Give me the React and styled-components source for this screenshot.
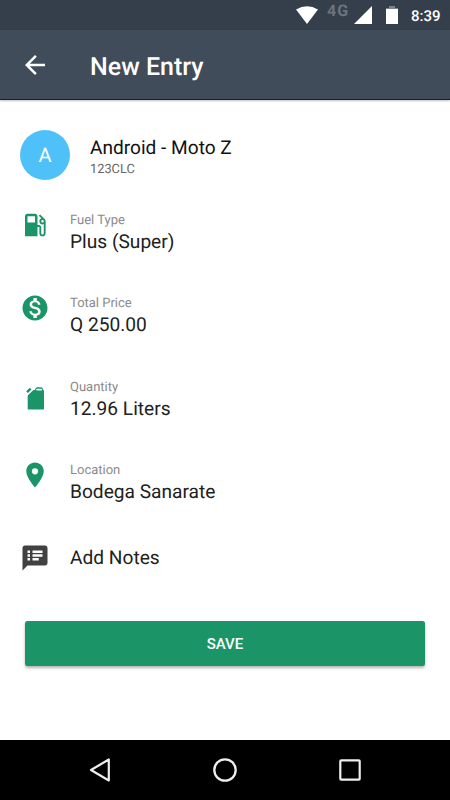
import styled, { createGlobalStyle } from "styled-components";
import {
  MdArrowBack,
  MdLocalGasStation,
  MdMonetizationOn,
  MdPlace,
  MdSpeakerNotes,
} from "react-icons/md";

const GlobalStyle = createGlobalStyle`
  * {
    box-sizing: border-box;
  }
  body {
    margin: 0;
    background-color: white;
    font-family: Roboto, sans-serif;
    text-rendering: geometricPrecision;
  }
`;

const Container = styled.div`
  display: flex;
  flex-direction: column;
  width: 450px;
  height: 800px;
  background-color: white;
  overflow: hidden;
`;
const StatusBar = styled.div`
  display: flex;
  align-items: center;
  justify-content: flex-end;
  flex-shrink: 0;
  height: 30px;
  padding-right: 10px;
  background-color: #343f4b;
  color: white;
`;
const StatusIcon = styled.svg`
  display: block;
  margin-right: ${(props) => props.$gap}px;
`;
const Network = styled.span`
  width: 22px;
  height: 30px;
  padding-top: 2px;
  margin-right: 5px;
  font-size: 16px;
  line-height: 18px;
  font-weight: 700;
  letter-spacing: 1px;
  color: #6b747e;
`;
const Clock = styled.span`
  width: 29px;
  padding-top: 1px;
  font-size: 15px;
  line-height: 30px;
  font-weight: 500;
  white-space: nowrap;
`;
const Toolbar = styled.header`
  display: flex;
  align-items: center;
  flex-shrink: 0;
  height: 70px;
  padding: 0px 20px;
  background-color: #414c5a;
  border-bottom: 1px solid #0f2238;
  box-shadow: 0px 1px 2px rgba(0, 0, 0, 0.25);
  color: white;
`;
const BackButton = styled.button`
  display: flex;
  width: 30px;
  height: 30px;
  padding: 0px;
  border: none;
  background: none;
  color: white;
  cursor: pointer;
`;
const Title = styled.h1`
  margin: 6px 0px 0px 40px;
  font-size: 25px;
  line-height: 30px;
  font-weight: 500;
`;
const Wrapper = styled.main`
  flex: 1;
  padding: 30px 20px 0px;
`;
const Vehicle = styled.div`
  display: flex;
  align-items: center;
  height: 50px;
`;
const Avatar = styled.div`
  width: 50px;
  height: 50px;
  border-radius: 50%;
  background-color: #4fc1f9;
  color: white;
  font-size: 20px;
  line-height: 50px;
  text-align: center;
`;
const VehicleInfo = styled.div`
  display: flex;
  flex-direction: column;
  margin-left: 20px;
  padding-top: 3px;
`;
const VehicleName = styled.span`
  font-size: 19.1px;
  line-height: 23px;
  color: #111;
`;
const VehiclePlate = styled.span`
  padding-top: 2px;
  font-size: 12.8px;
  line-height: 17px;
  color: #666;
`;
const Fields = styled.div`
  padding-top: 30px;
`;
const Field = styled.div`
  display: flex;
  height: 83.33px;
`;
const FieldIcon = styled.div`
  display: flex;
  flex-shrink: 0;
  width: 50px;
  height: 30px;
  margin-top: ${(props) => props.$top || 0}px;
  color: ${(props) => (props.$dark ? "#414141" : "#1b9567")};
`;
const Details = styled.div`
  display: flex;
  flex-direction: column;
`;
const Label = styled.span`
  padding-top: 2px;
  font-size: 13px;
  line-height: 17px;
  color: #8b8b8b;
`;
const Value = styled.span`
  font-size: 19.15px;
  line-height: 26px;
  color: #212121;
`;
const Notes = styled.div`
  display: flex;
  align-items: center;
  height: 30px;
`;
const SaveButton = styled.button`
  display: block;
  width: 400px;
  height: 45px;
  margin: 48px auto 0px;
  padding: 1px 0px 0px;
  border: none;
  border-radius: 2.5px;
  background-color: #1b9567;
  box-shadow: 0px 2px 3px rgba(0, 0, 0, 0.3);
  color: white;
  font-family: inherit;
  font-size: 15px;
  font-weight: 500;
  cursor: pointer;
`;
const NavBar = styled.nav`
  display: flex;
  align-items: center;
  justify-content: center;
  gap: 95px;
  flex-shrink: 0;
  height: 60px;
  background-color: black;
`;

const GasCan = () => (
  <svg width="30" height="30" viewBox="0 0 30 30" fill="currentColor">
    <path d="M7.7 10.4 13.4 5h1.6q.2-2.8 2.1-2.8h4.2q1.7 0 1.9 2.5.8.3.8 1.6V24.5H7.7z" />
    <path d="M17 4.6h4.4" stroke="white" strokeWidth="1.6" strokeLinecap="round" />
    <path d="M7 7.2 10.7 3.7" stroke="currentColor" strokeWidth="2.4" />
  </svg>
);

const fields = [
  { label: "Fuel Type", value: "Plus (Super)", icon: <MdLocalGasStation size={30} /> },
  { label: "Total Price", value: "Q 250.00", icon: <MdMonetizationOn size={30} /> },
  { label: "Quantity", value: "12.96 Liters", icon: <GasCan />, top: 8 },
  { label: "Location", value: "Bodega Sanarate", icon: <MdPlace size={30} /> },
];

const App = () => {
  return (
    <>
      <GlobalStyle />
      <Container>
        <StatusBar>
          <StatusIcon $gap={9} width="22" height="18" viewBox="0 0 22 18">
            <path d="M0 3.5Q11-3 22 3.5L11 18z" fill="white" />
          </StatusIcon>
          <Network>4G</Network>
          <StatusIcon $gap={14} width="18" height="18" viewBox="0 0 18 18">
            <path d="M18 0V18H0z" fill="white" />
          </StatusIcon>
          <StatusIcon $gap={13} width="12" height="18" viewBox="0 0 12 18">
            <path d="M3 0h6v2h3v1H0V2h3z" fill="#7b838b" />
            <path d="M0 3h12v15H0z" fill="white" />
          </StatusIcon>
          <Clock>8:39</Clock>
        </StatusBar>
        <Toolbar>
          <BackButton aria-label="Back">
            <MdArrowBack size={30} />
          </BackButton>
          <Title>New Entry</Title>
        </Toolbar>
        <Wrapper>
          <Vehicle>
            <Avatar>A</Avatar>
            <VehicleInfo>
              <VehicleName>Android - Moto Z</VehicleName>
              <VehiclePlate>123CLC</VehiclePlate>
            </VehicleInfo>
          </Vehicle>
          <Fields>
            {fields.map((field) => (
              <Field key={field.label}>
                <FieldIcon $top={field.top}>{field.icon}</FieldIcon>
                <Details>
                  <Label>{field.label}</Label>
                  <Value>{field.value}</Value>
                </Details>
              </Field>
            ))}
          </Fields>
          <Notes>
            <FieldIcon $dark>
              <MdSpeakerNotes size={30} />
            </FieldIcon>
            <Value>Add Notes</Value>
          </Notes>
          <SaveButton>SAVE</SaveButton>
        </Wrapper>
        <NavBar>
          <svg width="30" height="30" viewBox="0 0 30 30">
            <path d="M23.8 4.5v21L6 15z" fill="none" stroke="#eee" strokeWidth="2.2" strokeLinejoin="round" />
          </svg>
          <svg width="30" height="30" viewBox="0 0 30 30">
            <circle cx="15" cy="15" r="10.7" fill="none" stroke="#eee" strokeWidth="2.3" />
          </svg>
          <svg width="30" height="30" viewBox="0 0 30 30">
            <rect x="5.3" y="5.3" width="19.4" height="19.4" rx="1" fill="none" stroke="#eee" strokeWidth="2.2" />
          </svg>
        </NavBar>
      </Container>
    </>
  );
};

export default App;
